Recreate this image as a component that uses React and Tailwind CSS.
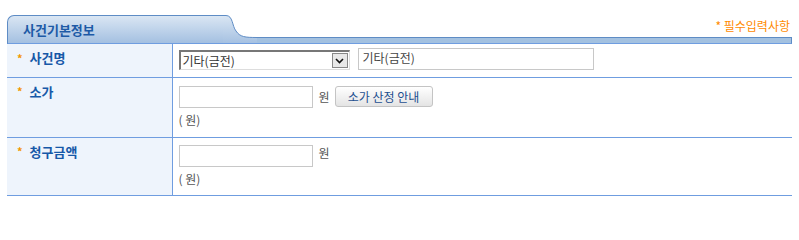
import React from "react";

const font = { fontFamily: '"Noto Sans CJK KR", "Noto Sans", sans-serif' };

const Star = () => (
  <span className="text-[#f39800] text-[11px] mr-[7px] font-bold">*</span>
);

const Label = ({ children }) => (
  <td className="w-[165px] bg-[#eef4fc] border-r border-[#6f9de0] align-top pl-[10px] pt-[4px]">
    <div className="flex items-center text-[13px] font-bold text-[#1658a8]">
      <Star />
      {children}
    </div>
  </td>
);

const TabHeader = () => (
  <div className="flex items-end h-[29px] pl-[7px] pr-[7px]">
    <div className="w-[216px] h-[29px] rounded-tl-[7px] border-l border-t border-[#5e8cc5] bg-gradient-to-b from-[#dae6f3] to-[#a4c0e1] flex items-center pl-[15px] border-b border-b-[#6f9de0]">
      <span className="text-[13px] font-bold text-[#1d5aa6]">사건기본정보</span>
    </div>
    <svg width="34" height="29" viewBox="0 0 34 29" className="block shrink-0">
      <defs>
        <linearGradient id="tg" x1="0" y1="0" x2="0" y2="1">
          <stop offset="0" stopColor="#dae6f3" />
          <stop offset="1" stopColor="#a4c0e1" />
        </linearGradient>
      </defs>
      <path d="M0 0.5 H3 C10 0.5 9 11 13 16 C17 22 22 22.5 34 22.5 V29 H0 Z" fill="url(#tg)" />
      <path d="M0 0.5 H3 C10 0.5 9 11 13 16 C17 22 22 22.5 34 22.5" fill="none" stroke="#5e8cc5" strokeWidth="1" />
      <line x1="0" y1="28.5" x2="34" y2="28.5" stroke="#6f9de0" />
    </svg>
    <div className="flex-1 h-[7px] bg-[#a3c1e0] border-t border-r border-[#5e8cc5] border-b border-b-[#6f9de0]" />
  </div>
);

const App = () => {
  return (
    <div className="w-[799px] h-[202px] bg-white" style={font}>
      <div className="flex justify-end pr-[9px] h-[15px]">
        <span className="text-[12px] text-[#ff8a00] leading-none mt-[20px] h-0">* 필수입력사항</span>
      </div>
      <TabHeader />
      <div className="px-[7px]">
        <table className="w-full border-collapse text-[12px] text-[#444]">
          <tbody>
            <tr className="h-[33px] border-b border-[#6f9de0]">
              <Label>사건명</Label>
              <td className="pl-[6px] align-top pt-[6px]">
                <div className="flex items-center gap-[8px]">
                  <div className="w-[171px] h-[20px] border-l-2 border-t-2 border-[#777] border-r border-b border-r-[#ddd] border-b-[#ddd] bg-white flex items-center justify-between">
                    <span className="pl-[2px] text-[12px] text-[#333] leading-none">기타(금전)</span>
                    <div className="w-[16px] h-[15px] mr-[1px] border border-[#888] bg-[#e8e8e8] flex items-center justify-center">
                      <svg width="9" height="6" viewBox="0 0 9 6">
                        <path d="M1 1 L4.5 4.5 L8 1" fill="none" stroke="#111" strokeWidth="1.6" />
                      </svg>
                    </div>
                  </div>
                  <div className="w-[236px] h-[22px] border border-[#c8c8c8] bg-white pl-[4px] -mt-[2px]">
                    <span className="text-[12px] text-[#444] leading-[18px]">기타(금전)</span>
                  </div>
                </div>
              </td>
            </tr>
            <tr className="h-[60px] border-b border-[#6f9de0]">
              <Label>소가</Label>
              <td className="pl-[6px] align-top pt-[8px]">
                <div className="flex items-center">
                  <div className="w-[134px] h-[22px] border border-[#c8c8c8] bg-white" />
                  <span className="ml-[6px] text-[#555]">원</span>
                  <button className="ml-[5px] w-[98px] h-[21px] rounded-[3px] border border-[#c4c4c4] bg-gradient-to-b from-[#ffffff] to-[#e4e4e4] text-[12px] text-[#1d4f8f] leading-none">
                    소가 산정 안내
                  </button>
                </div>
                <div className="mt-[3px] text-[#555]">( 원)</div>
              </td>
            </tr>
            <tr className="h-[58px] border-b border-[#6f9de0]">
              <Label>청구금액</Label>
              <td className="pl-[6px] align-top pt-[7px]">
                <div className="flex items-center">
                  <div className="w-[134px] h-[22px] border border-[#c8c8c8] bg-white" />
                  <span className="ml-[6px] text-[#555] -mt-[5px]">원</span>
                </div>
                <div className="mt-[3px] text-[#555]">( 원)</div>
              </td>
            </tr>
          </tbody>
        </table>
      </div>
    </div>
  );
};

export default App;
